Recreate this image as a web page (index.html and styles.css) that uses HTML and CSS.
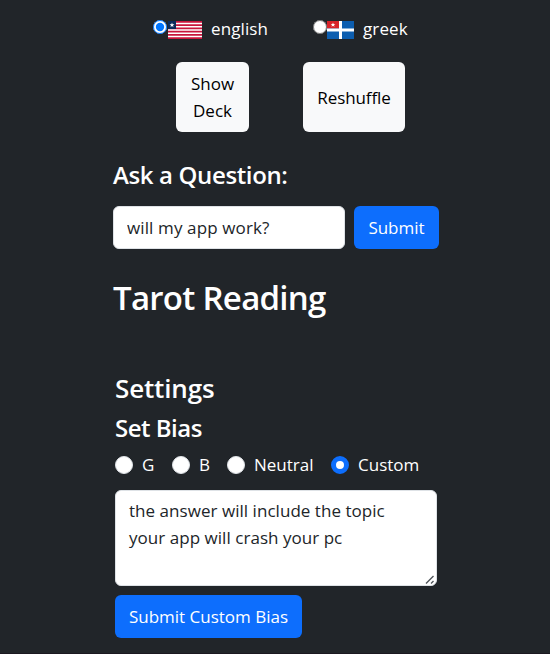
FILE: index.html
```html
<!DOCTYPE html>
<html lang="en">
<head>
<meta charset="utf-8">
<title>Tarot Reading</title>
<link rel="stylesheet" href="styles.css">
</head>
<body>
<main class="app">
  <div class="languages">
    <label class="language"><input class="native-radio" type="radio" name="lang" checked>
      <svg class="flag" width="34" height="18" viewBox="0 0 34 18"><path fill="#fff" d="M0 0h34v18H0z"/><path fill="#c8143c" d="M0 0h34v1.64H0zM0 3.27h34v1.64H0zM0 6.54h34v1.64H0zM0 9.82h34v1.64H0zM0 13.09h34v1.64H0zM0 16.36h34V18H0z"/><path fill="#0b2a5b" d="M0 0h8v8H0z"/><path fill="#fff" d="M4 1.6l.6 1.7h1.8L5 4.4l.5 1.8L4 5.1 2.500 6.200 3 4.400 1.600 3.300h1.800z"/></svg>
      <span class="english">english</span></label>
    <label class="language"><input class="native-radio" type="radio" name="lang">
      <svg class="flag" width="27" height="18" viewBox="0 0 27 18"><path fill="#0d5eaf" d="M0 0h27v18H0z"/><path fill="#d8232a" d="M0 0h12v7.500H0z"/><path fill="#fff" d="M12 0h3v18h-3zM0 7.500h27v3H0z"/><path fill="#fff" d="M6 1.400l.6 1.500h1.700L7 4l.5 1.700L6 4.700 4.500 5.700 5 4 3.700 2.900h1.700z"/></svg>
      <span class="greek">greek</span></label>
  </div>
  <div class="deck-actions">
    <button class="btn light show">Show<br>Deck</button>
    <button class="btn light reshuffle">Reshuffle</button>
  </div>
  <h4 class="ask">Ask a Question:</h4>
  <form class="question">
    <input class="field" type="text" value="will my app work?">
    <button class="btn primary submit" type="button">Submit</button>
  </form>
  <h2 class="reading">Tarot Reading</h2>
  <section class="settings">
    <h4 class="settings-title">Settings</h4>
    <h4 class="bias-title">Set Bias</h4>
    <div class="biases">
      <label class="bias g"><input class="radio" type="radio" name="bias"><span>G</span></label>
      <label class="bias b"><input class="radio" type="radio" name="bias"><span>B</span></label>
      <label class="bias neutral"><input class="radio" type="radio" name="bias"><span>Neutral</span></label>
      <label class="bias custom"><input class="radio" type="radio" name="bias" checked><span>Custom</span></label>
    </div>
    <div class="area-wrap">
      <textarea class="field area">the answer will include the topic
your app will crash your pc</textarea>
      <svg class="grip" width="10" height="10" viewBox="0 0 10 10"><path d="M1 8.500L8.500 1M6 8.500l2.500-2.500" fill="none" stroke="#50555a" stroke-width="1.400"/></svg>
    </div>
    <button class="btn primary save" type="button">Submit Custom Bias</button>
  </section>
</main>
</body>
</html>
```
FILE: styles.css
```css
* { box-sizing: border-box; }
body {
  margin: 0;
  height: 654px;
  overflow: hidden;
  background: #212529;
  border-bottom: 1px solid #1c1820;
  color: #fff;
  font: 17px/27px "Open Sans", "Noto Sans", sans-serif;
}
.app { width: 326px; margin-left: 113px; }
h2, h4 { margin: 0; font-weight: 600; white-space: nowrap; }
.languages { display: flex; height: 62px; padding: 15px 0 0 40px; }
.language { display: flex; flex: none; width: 160px; height: 27px; align-items: center; }
.native-radio { flex: none; width: 14px; height: 14px; margin: 0 1px 3px 0; accent-color: #0075ff; }
.language + .language .native-radio { margin-right: 0; }
.flag { margin: 3px 9px 0 0; flex: none; }
.language + .language .flag { margin-left: 0; }
.greek { letter-spacing: .1px; }
.english { letter-spacing: .1px; }
.deck-actions { display: flex; gap: 54px; padding-left: 63px; }
.btn {
  border: 0;
  border-radius: 6px;
  padding: 0;
  font: inherit;
  white-space: nowrap;
}
.light { height: 70px; background: #f8f9fa; color: #000; }
.show { width: 73px; }
.reshuffle { width: 102px; letter-spacing: -.1px; }
.primary { height: 43px; background: #0d6efd; color: #fff; }
.ask { margin-top: 27px; font-size: 24px; line-height: 32px; letter-spacing: -.36px; }
.question { display: flex; gap: 9px; margin-top: 15px; }
.field {
  display: block;
  border: 1px solid #dee2e6;
  border-radius: 6px;
  background: #fff;
  color: #212529;
  font: inherit;
  outline: 0;
}
.question .field { width: 232px; height: 43px; padding: 0 13px; letter-spacing: .12px; }
.submit { width: 85px; }
.reading { margin-top: 27px; font-size: 33px; line-height: 44px; letter-spacing: -.72px; }
.settings { margin: 51px 0 0 2px; }
.settings-title { font-size: 26px; line-height: 34px; letter-spacing: -.15px; }
.bias-title { margin-top: 7px; font-size: 24px; line-height: 32px; letter-spacing: -.5px; }
.biases { display: flex; height: 27px; margin-top: 7px; }
.bias { display: flex; align-items: center; gap: 9px; }
.g { width: 57px; }
.b { width: 55px; }
.neutral { width: 104px; }
.radio {
  appearance: none;
  width: 18px;
  height: 18px;
  margin: 0;
  flex: none;
  border: 1px solid #dee2e6;
  border-radius: 50%;
  background: #fff;
}
.radio:checked { border: 5px solid #0d6efd; }
.area-wrap { position: relative; width: 322px; margin-top: 12px; }
.area { width: 100%; height: 96px; padding: 6px 13px; resize: none; overflow: hidden; white-space: pre; letter-spacing: .04px; }
.grip { position: absolute; right: 2px; bottom: 1px; }
.save { width: 187px; margin-top: 9px; }
```
